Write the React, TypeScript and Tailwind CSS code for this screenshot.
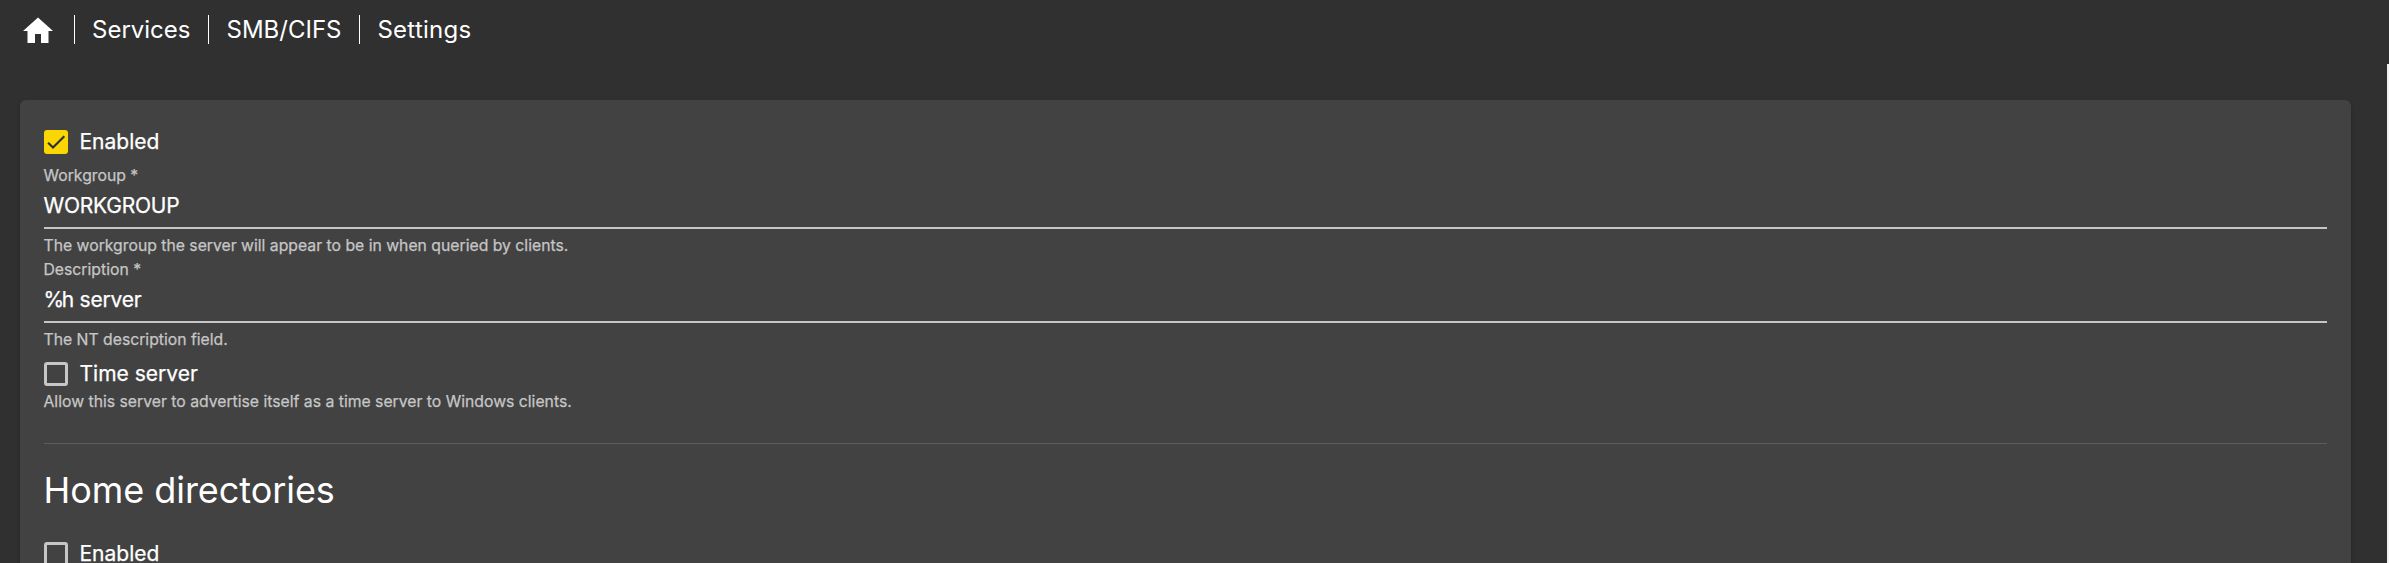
import type { ReactNode } from 'react';

function Checkbox({ checked, children }: { checked?: boolean; children: ReactNode }) {
  return (
    <label className="flex h-6 items-center gap-[11.5px] text-[21px] leading-6 [-webkit-text-stroke:0.25px]">
      {checked ? (
        <span className="size-6 shrink-0 rounded-[3px] bg-[#fad602]">
          <svg viewBox="0 0 24 24" className="size-6" fill="none" stroke="#303030" strokeWidth="2.13">
            <path d="M4.1 12.7 9 17.6 20.3 6.3" />
          </svg>
        </span>
      ) : (
        <span className="size-6 shrink-0 rounded-[3px] border-3 border-[#c6c6c6]" />
      )}
      <span>{children}</span>
    </label>
  );
}

function Hint({ children }: { children: ReactNode }) {
  return (
    <p className="-ml-[0.5px] text-[15.75px] leading-[19px] text-[#c6c6c6] [-webkit-text-stroke:0.25px]">{children}</p>
  );
}

function Field({ label, value, hint }: { label: string; value: ReactNode; hint: string }) {
  return (
    <div className="h-[94px]">
      <Hint>{label}</Hint>
      <div className="mb-[7px] h-[44px] border-b-2 border-[#c6c6c6] pt-[9px] text-[21px] leading-6 [-webkit-text-stroke:0.25px]">
        <span className="-ml-[0.5px]">{value}</span>
      </div>
      <Hint>{hint}</Hint>
    </div>
  );
}

function Separator() {
  return <span className="mr-[17px] ml-[18px] h-[29px] w-px shrink-0 bg-white" />;
}

export default function App() {
  return (
    <div className="flex h-[563px] flex-col overflow-hidden bg-[#303030] font-['Inter',sans-serif] text-white">
      <nav className="flex h-16 shrink-0 items-start pt-[15px] pl-5 text-2xl leading-[29px]">
        <svg viewBox="0 0 24 24" className="-mt-[2px] size-9" fill="currentColor">
          <path d="M10 20v-6h4v6h5v-8h3L12 3 2 12h3v8z" />
        </svg>
        <Separator />
        <span>Services</span>
        <Separator />
        <span>SMB/CIFS</span>
        <Separator />
        <span className="tracking-[0.25px]">Settings</span>
      </nav>
      <div className="flex min-h-0 flex-1">
        <main className="min-w-0 flex-1 overflow-hidden pt-9 pr-9 pl-5">
          <section className="h-[600px] rounded-[6px] bg-[#424242] px-6 pt-[30px] shadow-[0_3px_2px_-2px_rgba(0,0,0,0.2),0_2px_2px_rgba(0,0,0,0.14),0_2px_5px_rgba(0,0,0,0.12)]">
            <Checkbox checked>Enabled</Checkbox>
            <div className="mt-3">
              <Field
                label="Workgroup *"
                value={<span className="tracking-[-0.23px]">WORKGROUP</span>}
                hint="The workgroup the server will appear to be in when queried by clients."
              />
              <Field
                label="Description *"
                value={
                  <span>
                    <span className="tracking-[-2.5px]">%</span>
                    <span className="tracking-[-0.2px]">h server</span>
                  </span>
                }
                hint="The NT description field."
              />
            </div>
            <div className="mt-2 flex flex-col gap-[6px]">
              <Checkbox>Time server</Checkbox>
              <Hint>Allow this server to advertise itself as a time server to Windows clients.</Hint>
            </div>
            <hr className="mt-[32px] border-t border-[#5c5c5c]" />
            <h2 className="-ml-[0.5px] mt-[22px] mb-7 text-4xl leading-[48px] tracking-[-0.05px]">Home directories</h2>
            <Checkbox>Enabled</Checkbox>
          </section>
        </main>
        <div className="w-[2px] bg-[#f1f1f1]" />
      </div>
    </div>
  );
}
